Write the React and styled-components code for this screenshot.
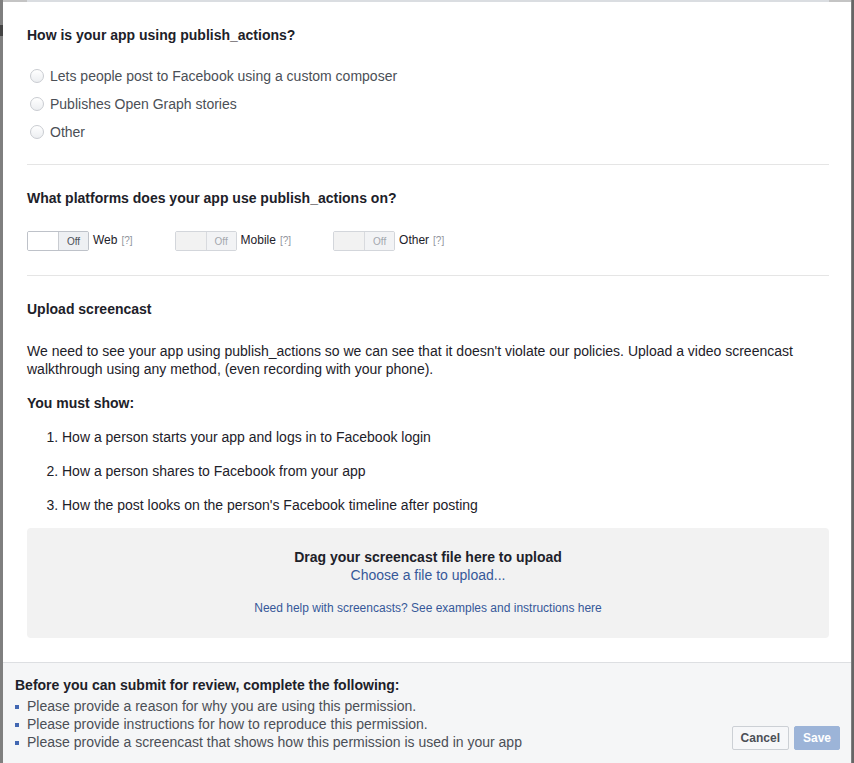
import React from "react";
import styled, { createGlobalStyle } from "styled-components";

const Global = createGlobalStyle`
  html, body { margin: 0; padding: 0; }
  body {
    background: #7f7f7f;
    font-family: "Liberation Sans", Arial, Helvetica, sans-serif;
    -webkit-font-smoothing: antialiased;
  }
`;

const Page = styled.div`
  display: flex;
  height: 763px;
  width: 854px;
  overflow: hidden;
  background: #7f7f7f;
`;

const LeftEdge = styled.div`
  width: 3px;
  display: flex;
  flex-direction: column;
  padding-top: 25px;
`;

const EdgeMark = styled.div`
  width: 3px;
  height: 11px;
  background: #444;
`;

const RightEdge = styled.div`
  width: 2px;
  margin-left: 1px;
  background: #666;
`;

const Modal = styled.div`
  width: 848px;
  background: #fff;
  display: flex;
  flex-direction: column;
`;

const TopStrip = styled.div`
  height: 2px;
  background: #c4c4c4;
  display: flex;
  padding: 0 22px 0 24px;
`;

const TopLine = styled.div`
  flex: 1;
  background: #dadde1;
`;

const Body = styled.div`
  flex: 1;
  padding: 24px 22px 0 24px;
  display: flex;
  flex-direction: column;
`;

const Heading = styled.div`
  font-size: 14px;
  line-height: 18px;
  font-weight: bold;
  color: #1d2129;
  margin-top: ${(p) => p.$mt || 0}px;
`;

const RadioList = styled.div`
  display: flex;
  flex-direction: column;
  gap: 10px;
  margin-top: 23px;
`;

const RadioRow = styled.label`
  display: flex;
  align-items: center;
  font-size: 14px;
  line-height: 18px;
  color: #4b4f56;
  padding-left: 3px;
`;

const RadioCircle = styled.span`
  width: 12px;
  height: 12px;
  border-radius: 50%;
  border: 1px solid #c9ccd1;
  background: linear-gradient(#fff, #eceef1);
  margin-right: 6px;
  box-sizing: content-box;
`;

const Divider = styled.div`
  height: 1px;
  background: #e5e5e5;
  margin: ${(p) => p.$mt || 24}px 0 24px;
`;

const ToggleRow = styled.div`
  display: flex;
  align-items: center;
  margin-top: 24px;
  gap: 42px;
`;

const ToggleGroup = styled.div`
  display: flex;
  align-items: center;
`;

const Toggle = styled.div`
  width: 60px;
  height: 18px;
  border: 1px solid ${(p) => (p.$disabled ? "#d3d6db" : "#bec2c9")};
  border-radius: 2px;
  display: flex;
  overflow: hidden;
`;

const Knob = styled.div`
  width: 30px;
  background: ${(p) => (p.$disabled ? "#f2f2f2" : "#fff")};
  border-right: 1px solid ${(p) => (p.$disabled ? "#d8dade" : "#c9ccd1")};
`;

const OffPart = styled.div`
  flex: 1;
  background: ${(p) => (p.$disabled ? "#f2f3f5" : "#eef0f3")};
  font-size: 10px;
  color: ${(p) => (p.$disabled ? "#a3a7ae" : "#4b4f56")};
  display: flex;
  align-items: center;
  justify-content: center;
  padding-top: 1px;
`;

const ToggleLabel = styled.span`
  font-size: 12px;
  color: #1d2129;
  margin-left: 4px;
  line-height: 14px;
  margin-bottom: 2px;
`;

const Help = styled.span`
  font-size: 10px;
  color: #90949c;
  margin-left: 4px;
`;

const Paragraph = styled.p`
  margin: 24px 0 0;
  font-size: 14px;
  line-height: 18px;
  color: #1d2129;
`;

const Steps = styled.ol`
  margin: 16px 0 0;
  padding: 0 0 0 35px;
  display: flex;
  flex-direction: column;
  gap: 16px;
  font-size: 14px;
  line-height: 18px;
  color: #1d2129;
`;

const Step = styled.li`
  padding-left: 0;
`;

const DropZone = styled.div`
  margin-top: 14px;
  background: #f2f2f2;
  border-radius: 4px;
  padding: 20px 0 22px;
  display: flex;
  flex-direction: column;
  align-items: center;
`;

const DropTitle = styled.div`
  font-size: 14px;
  line-height: 18px;
  font-weight: bold;
  color: #1d2129;
`;

const Link = styled.a`
  color: #365899;
  font-size: ${(p) => p.$size || 14}px;
  line-height: ${(p) => (p.$size === 12 ? 16 : 18)}px;
  margin-top: ${(p) => p.$mt || 0}px;
  text-decoration: none;
  cursor: pointer;
`;

const Footer = styled.div`
  margin-top: 23px;
  border-top: 1px solid #dddfe2;
  background: #f5f6f7;
  height: 101px;
  box-sizing: border-box;
  padding: 13px 11px 13px 12px;
  display: flex;
  justify-content: space-between;
  align-items: flex-end;
`;

const Requirements = styled.div`
  align-self: flex-start;
  display: flex;
  flex-direction: column;
`;

const ReqTitle = styled.div`
  font-size: 14px;
  line-height: 18px;
  font-weight: bold;
  color: #1d2129;
`;

const ReqList = styled.ul`
  list-style: none;
  margin: 3px 0 0;
  padding: 0;
`;

const ReqItem = styled.li`
  display: flex;
  align-items: center;
  font-size: 14px;
  line-height: 18px;
  color: #4b4f56;
  &::before {
    content: "";
    width: 4px;
    height: 4px;
    background: #4267b2;
    margin-right: 8px;
    margin-top: 2px;
  }
`;

const Buttons = styled.div`
  display: flex;
  gap: 5px;
`;

const Button = styled.button`
  height: 24px;
  padding: 0 8px;
  border-radius: 2px;
  font-family: inherit;
  font-size: 12px;
  font-weight: bold;
  border: 1px solid ${(p) => (p.$primary ? "#9cb4d8" : "#ccd0d5")};
  background: ${(p) => (p.$primary ? "#9cb4d8" : "#f6f7f9")};
  color: ${(p) => (p.$primary ? "#fff" : "#4b4f56")};
  box-sizing: border-box;
`;

const platforms = [
  { label: "Web", disabled: false },
  { label: "Mobile", disabled: true },
  { label: "Other", disabled: true },
];

export default function App() {
  return (
    <>
      <Global />
      <Page>
        <LeftEdge>
          <EdgeMark />
        </LeftEdge>
        <Modal>
          <TopStrip>
            <TopLine />
          </TopStrip>
          <Body>
            <Heading>How is your app using publish_actions?</Heading>
            <RadioList>
              {[
                "Lets people post to Facebook using a custom composer",
                "Publishes Open Graph stories",
                "Other",
              ].map((t) => (
                <RadioRow key={t}>
                  <RadioCircle />
                  {t}
                </RadioRow>
              ))}
            </RadioList>
            <Divider $mt={23} />
            <Heading>What platforms does your app use publish_actions on?</Heading>
            <ToggleRow>
              {platforms.map((p) => (
                <ToggleGroup key={p.label}>
                  <Toggle $disabled={p.disabled}>
                    <Knob $disabled={p.disabled} />
                    <OffPart $disabled={p.disabled}>Off</OffPart>
                  </Toggle>
                  <ToggleLabel>
                    {p.label}
                    <Help>[?]</Help>
                  </ToggleLabel>
                </ToggleGroup>
              ))}
            </ToggleRow>
            <Divider $mt={24} />
            <Heading>Upload screencast</Heading>
            <Paragraph>
              We need to see your app using publish_actions so we can see that it doesn't violate our
              policies. Upload a video screencast walkthrough using any method, (even recording with
              your phone).
            </Paragraph>
            <Heading $mt={16}>You must show:</Heading>
            <Steps>
              <Step>How a person starts your app and logs in to Facebook login</Step>
              <Step>How a person shares to Facebook from your app</Step>
              <Step>How the post looks on the person's Facebook timeline after posting</Step>
            </Steps>
            <DropZone>
              <DropTitle>Drag your screencast file here to upload</DropTitle>
              <Link>Choose a file to upload...</Link>
              <Link $size={12} $mt={16}>
                Need help with screencasts? See examples and instructions here
              </Link>
            </DropZone>
          </Body>
          <Footer>
            <Requirements>
              <ReqTitle>Before you can submit for review, complete the following:</ReqTitle>
              <ReqList>
                <ReqItem>Please provide a reason for why you are using this permission.</ReqItem>
                <ReqItem>Please provide instructions for how to reproduce this permission.</ReqItem>
                <ReqItem>Please provide a screencast that shows how this permission is used in your app</ReqItem>
              </ReqList>
            </Requirements>
            <Buttons>
              <Button>Cancel</Button>
              <Button $primary>Save</Button>
            </Buttons>
          </Footer>
        </Modal>
        <RightEdge />
      </Page>
    </>
  );
}
